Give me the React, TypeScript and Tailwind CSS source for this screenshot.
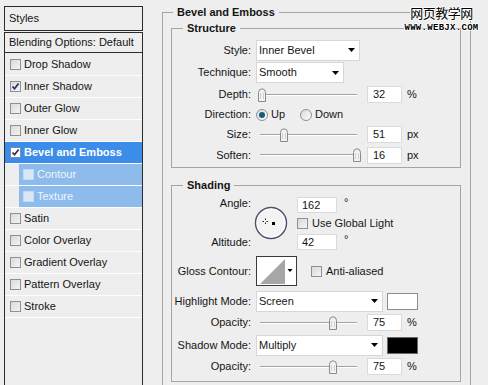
import type { ReactNode } from "react";

const styles = [
  { name: "Drop Shadow" },
  { name: "Inner Shadow", on: true },
  { name: "Outer Glow" },
  { name: "Inner Glow" },
  { name: "Bevel and Emboss", on: true, active: true },
  { name: "Contour", sub: true },
  { name: "Texture", sub: true },
  { name: "Satin" },
  { name: "Color Overlay" },
  { name: "Gradient Overlay" },
  { name: "Pattern Overlay" },
  { name: "Stroke" },
];

const Tick = () => (
  <svg width="9" height="9" viewBox="0 0 9 9">
    <path d="M1.5 4.5l2 2.2L7.6 1.4" fill="none" stroke="#22305a" strokeWidth="1.7" />
  </svg>
);

const Check = ({ on = false, tone = "grey" }: { on?: boolean; tone?: "grey" | "white" | "blue" }) => {
  const look =
    tone === "white"
      ? "border-[#7c8ea3] bg-white"
      : tone === "blue"
        ? "border-[#c4daf3] bg-[#dbe7f4]"
        : "border-[#8f9090] bg-linear-to-br from-[#dadada] to-[#f4f4f4]";
  return (
    <span className={`flex h-[11px] w-[11px] shrink-0 items-center justify-center border ${look}`}>
      {on && <Tick />}
    </span>
  );
};

const Radio = ({ on = false }: { on?: boolean }) => (
  <span className="flex h-[12px] w-[12px] shrink-0 items-center justify-center rounded-full border border-[#86939c] bg-linear-to-br from-[#d9d9d9] to-white">
    {on && <span className="h-[6px] w-[6px] rounded-full bg-[#1d5a72]" />}
  </span>
);

const Arrow = () => (
  <svg width="7" height="4" viewBox="0 0 7 4">
    <path d="M0 0h7L3.5 4z" fill="#000" />
  </svg>
);

const Select = ({ value, w }: { value: string; w: string }) => (
  <div className={`flex h-[21px] items-center justify-between border border-[#d6d6d6] bg-white pl-[2px] pr-[4px] ${w}`}>
    <span>{value}</span>
    <Arrow />
  </div>
);

const Num = ({ v, w = "w-[35px]" }: { v: string; w?: string }) => (
  <div className={`h-[17px] border border-[#dadada] bg-white pl-[5px] leading-[15px] ${w}`}>{v}</div>
);

const Slider = ({ at }: { at: number }) => (
  <div className="relative h-[14px] w-[105px] shrink-0">
    <div className="absolute left-[4px] top-[6px] w-[97px] border-t border-b border-t-[#a3a3a3] border-b-white" />
    <svg className="absolute top-0" style={{ left: at - 4 }} width="8" height="14" viewBox="0 0 8 14">
      <path d="M0.5 4.5Q0.5 1 4 0.8Q7.5 1 7.5 4.5V13.5H0.5Z" fill="#f2f2f2" stroke="#8a8a8a" />
      <path d="M2.5 5v6M5.5 5v6" stroke="#d0d0d0" />
    </svg>
  </div>
);

const Row = ({ label, h, children }: { label: string; h: string; children: ReactNode }) => (
  <div className={`flex items-center ${h}`}>
    <div className="w-[79px] shrink-0 text-right">{label}</div>
    <div className="ml-[5px] flex items-center">{children}</div>
  </div>
);

const SliderRow = ({ label, h, at, v, unit }: { label: string; h: string; at: number; v: string; unit: string }) => (
  <Row label={label} h={h}>
    <Slider at={at} />
    <div className="ml-[6px]">
      <Num v={v} />
    </div>
    <span className="ml-[5px]">{unit}</span>
  </Row>
);

const AngleDial = () => (
  <svg width="34" height="34" viewBox="0 0 34 34">
    <circle cx="17" cy="17" r="15.5" fill="#f3f3f3" stroke="#4d4d6c" strokeWidth="1.4" />
    <circle cx="17" cy="17" r="14" fill="none" stroke="#ffffff" strokeWidth="1" />
    <path d="M11.5 12.5v1.5M11.5 16.5v1.5M8.5 15.5h1.5M12.5 15.5h1.5" stroke="#222" strokeWidth="1" />
    <rect x="18" y="16" width="3" height="3" fill="#000" />
  </svg>
);

const ContourSwatch = () => (
  <svg width="41" height="30" viewBox="0 0 41 30">
    <rect x="0.5" y="0.5" width="40" height="29" fill="#fff" stroke="#3a3a3a" />
    <polygon points="4,28 29,3 29,28" fill="#a6a6a6" />
    <path d="M31.5 13h5l-2.5 3z" fill="#000" />
  </svg>
);

function StylesPanel() {
  return (
    <div className="ml-[4px] mt-[6px] flex h-[420px] w-[139px] shrink-0 flex-col">
      <div className="flex h-[25px] items-center border border-[#2b2b2b] pl-[4px]">Styles</div>
      <div className="mt-[1px] flex h-[21px] items-center border border-[#2b2b2b] pl-[4px]">Blending Options: Default</div>
      <div className="flex-1 border-x border-[#2b2b2b] pt-[1px]">
        {styles.map((s) =>
          s.sub ? (
            <div key={s.name} className="flex h-[22px] border-b border-white pl-[14px]">
              <div className="flex flex-1 items-center bg-[#8dbcec] pl-[4px] text-[#eef5fd]">
                <Check tone="blue" />
                <span className="ml-[3px]">{s.name}</span>
              </div>
            </div>
          ) : s.active ? (
            <div key={s.name} className="flex h-[22px] items-center border-b border-white bg-[#3c8dea] pl-[5px] font-bold text-white">
              <Check on tone="white" />
              <span className="ml-[3px]">{s.name}</span>
            </div>
          ) : (
            <div key={s.name} className="flex h-[22px] items-center border-b border-white pl-[5px]">
              <Check on={s.on} />
              <span className="ml-[3px]">{s.name}</span>
            </div>
          ),
        )}
      </div>
    </div>
  );
}

function BevelPanel() {
  return (
    <fieldset className="ml-[19px] mt-[5px] h-[420px] w-[309px] shrink-0 border border-[#a4a4a4]">
      <legend className="ml-[10px] px-[4px] font-bold leading-[14px]">Bevel and Emboss</legend>

      <fieldset className="ml-[8px] mt-[2px] w-[290px] border border-[#a4a4a4] pb-[2px]">
        <legend className="ml-[11px] px-[4px] font-bold leading-[14px]">Structure</legend>
        <div className="pt-[4px]">
          <Row label="Style:" h="h-[22px]">
            <Select value="Inner Bevel" w="w-[104px]" />
          </Row>
          <Row label="Technique:" h="h-[23px]">
            <Select value="Smooth" w="w-[88px]" />
          </Row>
          <SliderRow label="Depth:" h="h-[21px]" at={6} v="32" unit="%" />
          <Row label="Direction:" h="h-[19px]">
            <Radio on />
            <span className="ml-[3px]">Up</span>
            <span className="ml-[15px]">
              <Radio />
            </span>
            <span className="ml-[3px]">Down</span>
          </Row>
          <SliderRow label="Size:" h="h-[21px]" at={28} v="51" unit="px" />
          <SliderRow label="Soften:" h="h-[20px]" at={101} v="16" unit="px" />
        </div>
      </fieldset>

      <fieldset className="ml-[8px] mt-[10px] w-[290px] border border-[#a4a4a4] pb-[4px]">
        <legend className="ml-[11px] px-[4px] font-bold leading-[14px]">Shading</legend>
        <div className="pt-[5px]">
          <div className="flex h-[54px]">
            <div className="flex w-[79px] shrink-0 flex-col text-right leading-[13px]">
              <span>Angle:</span>
              <span className="mt-[26px]">Altitude:</span>
            </div>
            <div className="ml-[3px] mt-[9px]">
              <AngleDial />
            </div>
            <div className="ml-[9px] flex flex-col">
              <div className="flex items-start">
                <div className="h-[16px] w-[40px] border border-[#dadada] bg-white pl-[4px] leading-[14px]">162</div>
                <span className="ml-[7px] leading-[10px]">°</span>
              </div>
              <div className="mt-[4px] flex h-[12px] items-center">
                <Check />
                <span className="ml-[4px]">Use Global Light</span>
              </div>
              <div className="mt-[5px] flex items-start">
                <div className="h-[16px] w-[40px] border border-[#dadada] bg-white pl-[4px] leading-[14px]">42</div>
                <span className="ml-[7px] leading-[10px]">°</span>
              </div>
            </div>
          </div>

          <div className="mt-[5px]">
            <Row label="Gloss Contour:" h="h-[30px]">
              <ContourSwatch />
              <span className="ml-[14px] flex items-center">
                <Check />
                <span className="ml-[4px]">Anti-aliased</span>
              </span>
            </Row>
          </div>

          <div className="mt-[4px]">
            <Row label="Highlight Mode:" h="h-[22px]">
              <Select value="Screen" w="w-[127px]" />
              <div className="ml-[4px] h-[17px] w-[31px] border border-[#8c8c8c] bg-white" />
            </Row>
          </div>
          <SliderRow label="Opacity:" h="h-[21px]" at={77} v="75" unit="%" />
          <div className="mt-[1px]">
            <Row label="Shadow Mode:" h="h-[22px]">
              <Select value="Multiply" w="w-[127px]" />
              <div className="ml-[4px] h-[17px] w-[31px] border border-[#6a6a6a] bg-black" />
            </Row>
          </div>
          <SliderRow label="Opacity:" h="h-[21px]" at={77} v="75" unit="%" />
        </div>
      </fieldset>
    </fieldset>
  );
}

export default function App() {
  return (
    <div className="relative flex h-[385px] w-[488px] overflow-hidden bg-[#eeeeee] font-['Liberation_Sans',Arial,sans-serif] text-[11px] text-[#151515]">
      <StylesPanel />
      <BevelPanel />
      <div className="absolute left-[404px] top-[4px] flex w-[75px] flex-col items-center text-black">
        <span className="font-['Noto_Sans_CJK_SC',sans-serif] text-[13px] leading-[18px] tracking-[-0.5px] [text-shadow:1px_0_0_#fff,-1px_0_0_#fff,0_1px_0_#fff,0_-1px_0_#fff]">
          网页教学网
        </span>
        <span className="mt-[2px] font-['Liberation_Mono',monospace] text-[9px] font-bold leading-[9px] tracking-[0.3px] [text-shadow:1px_0_0_#fff,-1px_0_0_#fff,0_1px_0_#fff,0_-1px_0_#fff]">
          WWW.WEBJX.COM
        </span>
      </div>
    </div>
  );
}
